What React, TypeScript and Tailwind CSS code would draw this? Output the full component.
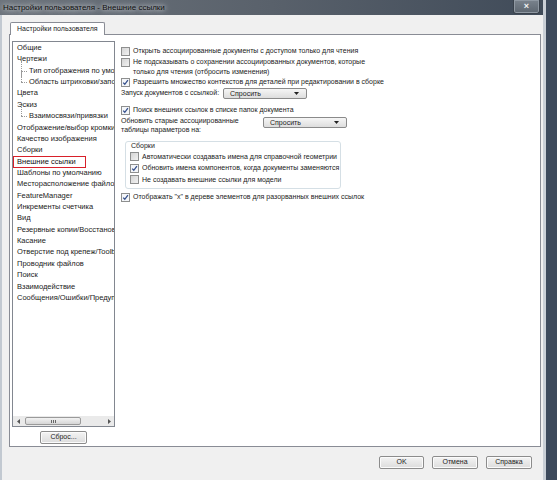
import React from "react";

function Box({ checked }: { checked?: boolean }) {
  return (
    <span
      className={
        "relative inline-block w-[9px] h-[9px] border border-[#8e8f8f] shrink-0 " +
        (checked ? "bg-[#f4f6f9]" : "bg-linear-to-br from-[#d4d4d4] to-[#f2f2f2]")
      }
    >
      {checked && (
        <svg className="absolute left-0 top-0" width="7" height="7" viewBox="0 0 7 7">
          <path d="M1.2 3.6 L2.8 5.3 L5.9 1.2" stroke="#36508c" strokeWidth="1.3" fill="none" />
        </svg>
      )}
    </span>
  );
}

function Check({ checked, children }: { checked?: boolean; children: React.ReactNode }) {
  return (
    <div className="flex items-center h-[11px] gap-[3px] whitespace-nowrap">
      <Box checked={checked} />
      <span>{children}</span>
    </div>
  );
}

function Combo() {
  return (
    <div className="w-[84px] h-[11px] border border-[#8a8a8a] rounded-[2px] bg-linear-to-b from-[#f6f6f6] to-[#dddddd] flex items-center justify-between pl-[6px] pr-[7px] leading-[9px]">
      <span>Спросить</span>
      <svg width="5" height="3" viewBox="0 0 5 3">
        <path d="M0 0 L5 0 L2.5 3 Z" fill="#222" />
      </svg>
    </div>
  );
}

function Btn({ children, w }: { children: React.ReactNode; w: string }) {
  return (
    <div
      className={
        "h-[13px] border border-[#8c8c8c] rounded-[2px] bg-linear-to-b from-[#f4f4f4] to-[#dcdcdc] flex items-center justify-center shadow-[inset_0_0_0_1px_#fbfbfb] " +
        w
      }
    >
      {children}
    </div>
  );
}

const items: { t: string; sub?: boolean; last?: boolean; sel?: boolean }[] = [
  { t: "Общие" },
  { t: "Чертежи" },
  { t: "Тип отображения по умолчанию", sub: true },
  { t: "Область штриховки/заполнения", sub: true, last: true },
  { t: "Цвета" },
  { t: "Эскиз" },
  { t: "Взаимосвязи/привязки", sub: true, last: true },
  { t: "Отображение/выбор кромки" },
  { t: "Качество изображения" },
  { t: "Сборки" },
  { t: "Внешние ссылки", sel: true },
  { t: "Шаблоны по умолчанию" },
  { t: "Месторасположение файлов" },
  { t: "FeatureManager" },
  { t: "Инкременты счетчика" },
  { t: "Вид" },
  { t: "Резервные копии/Восстановление" },
  { t: "Касание" },
  { t: "Отверстие под крепеж/Toolbox" },
  { t: "Проводник файлов" },
  { t: "Поиск" },
  { t: "Взаимодействие" },
  { t: "Сообщения/Ошибки/Предупреждения" },
];

export default function App() {
  return (
    <div className="w-[557px] h-[480px] flex bg-[#3d4a5c] text-[7px] text-[#222] font-['Liberation_Sans',Arial,sans-serif] overflow-hidden">
      <div className="w-[546px] h-full flex flex-col border-r-[3px] border-[#c9cfd6]">
        {/* title bar */}
        <div className="h-[15px] flex items-start bg-linear-to-r from-[#6d747c] via-[#59616b] to-[#404b59] shrink-0">
          <div className="pl-[3px] h-[15px] flex items-center text-[8px] text-[#101010] [text-shadow:0_0_4px_#cfd3d8,0_0_6px_#cfd3d8]">
            Настройки пользователя - Внешние ссылки
          </div>
          <div className="flex-1" />
          <div className="mr-[3px] w-[27px] h-[14px] border border-t-0 border-[#3a424c] rounded-b-[3px] bg-linear-to-b from-[#7a838d] to-[#5d6670] flex items-center justify-center text-[#f4f4f4] text-[9px] font-bold shadow-[inset_0_0_0_1px_#8f98a2]">
            ×
          </div>
        </div>
        {/* client */}
        <div className="flex-1 flex flex-col bg-[#f0f0f0] border-l-[2px] border-[#c2c9d1] pl-[7px] pr-[2px]">
          {/* tab strip */}
          <div className="mt-[7px] flex">
            <div className="ml-[1px] h-[13px] px-[6px] border border-b-0 border-[#898c95] bg-white flex items-center rounded-t-[2px] -mb-px relative z-10">
              Настройки пользователя
            </div>
          </div>
          {/* panel */}
          <div className="h-[413px] border border-[#898c95] bg-white flex">
            {/* left column */}
            <div className="flex flex-col pl-[2px] pt-[6px]">
              <div className="w-[103px] h-[386px] border border-[#828790] flex flex-col">
                <div className="flex-1 overflow-hidden text-[7.5px]">
                  {items.map((it, i) => (
                    <div key={i} className="h-[11.36px] leading-[11.36px] whitespace-nowrap relative">
                      {it.sub ? (
                        <div className="flex items-center h-full">
                          <div className="w-[9px] h-full relative shrink-0">
                            <div
                              className={
                                "absolute left-[8px] border-l border-dotted border-[#9a9a9a] " +
                                (it.last ? "top-[-5px] h-[11px]" : "top-[-4px] h-[16px]")
                              }
                            />
                            <div className="absolute left-[8px] top-[6px] w-[6px] border-t border-dotted border-[#9a9a9a]" />
                          </div>
                          <span className="pl-[7px]">{it.t}</span>
                        </div>
                      ) : it.sel ? (
                        <span className="inline-block pl-[3px] pr-[9px] h-[12px] leading-[10px] border border-[#d8202a] text-[#111]">
                          {it.t}
                        </span>
                      ) : (
                        <span className="pl-[4px]">{it.t}</span>
                      )}
                    </div>
                  ))}
                </div>
                {/* horizontal scrollbar */}
                <div className="h-[10px] bg-[#eaeaea] flex items-center">
                  <div className="w-[10px] flex items-center justify-center">
                    <svg width="3" height="5" viewBox="0 0 3 5">
                      <path d="M3 0 L0 2.5 L3 5 Z" fill="#555" />
                    </svg>
                  </div>
                  <div className="w-[56px] h-[8px] ml-[2px] border border-[#9a9a9a] rounded-[2px] bg-linear-to-b from-[#f2f2f2] to-[#d6d6d6] flex items-center justify-center">
                    <div className="flex gap-[1px]">
                      <div className="w-px h-[3px] bg-[#666]" />
                      <div className="w-px h-[3px] bg-[#666]" />
                      <div className="w-px h-[3px] bg-[#666]" />
                    </div>
                  </div>
                  <div className="flex-1" />
                  <div className="w-[10px] flex items-center justify-center">
                    <svg width="3" height="5" viewBox="0 0 3 5">
                      <path d="M0 0 L3 2.5 L0 5 Z" fill="#555" />
                    </svg>
                  </div>
                </div>
              </div>
              <div className="mt-[4px] flex justify-center">
                <Btn w="w-[47px]">Сброс...</Btn>
              </div>
            </div>
            {/* right column */}
            <div className="ml-[6px] pt-[11px] flex flex-col">
              <Check>Открыть ассоциированные документы с доступом только для чтения</Check>
              <div className="flex items-start gap-[3px] h-[20px] leading-[10px]">
                <div className="pt-[1px]"><Box /></div>
                <div>
                  <div>Не подсказывать о сохранении ассоциированных документов, которые</div>
                  <div>только для чтения (отбросить изменения)</div>
                </div>
              </div>
              <Check checked>Разрешить множество контекстов для деталей при редактировании в сборке</Check>
              <div className="flex items-center h-[11px]">
                <div className="w-[102px]">Запуск документов с ссылкой:</div>
                <Combo />
              </div>
              <div className="mt-[6px]">
                <Check checked>Поиск внешних ссылок в списке папок документа</Check>
              </div>
              <div className="flex items-start h-[20px]">
                <div className="w-[142px] leading-[8.5px] pt-[1px]">
                  <div>Обновить старые ассоциированные</div>
                  <div>таблицы параметров на:</div>
                </div>
                <div className="pt-[1px]">
                  <Combo />
                </div>
              </div>
              <div className="mt-[5px] ml-[4px] w-[216px] border border-[#d5dfe5] rounded-[3px] pl-[4px] pb-[2px]">
                <div className="h-[9px] leading-[7px] pl-[1px] text-[#1a1a1a]">Сборки</div>
                <div className="h-[11.5px] flex items-center">
                  <Check>Автоматически создавать имена для справочной геометрии</Check>
                </div>
                <div className="h-[11.5px] flex items-center">
                  <Check checked>Обновить имена компонентов, когда документы заменяются</Check>
                </div>
                <div className="h-[11.5px] flex items-center">
                  <Check>Не создавать внешние ссылки для модели</Check>
                </div>
              </div>
              <div className="mt-[3px]">
                <Check checked>Отображать "x" в дереве элементов для разорванных внешних ссылок</Check>
              </div>
            </div>
          </div>
          {/* bottom buttons */}
          <div className="mt-[9px] flex justify-end gap-[8px] pr-[9px]">
            <Btn w="w-[45px]">OK</Btn>
            <Btn w="w-[46px]">Отмена</Btn>
            <Btn w="w-[46px]">Справка</Btn>
          </div>
        </div>
      </div>
    </div>
  );
}
